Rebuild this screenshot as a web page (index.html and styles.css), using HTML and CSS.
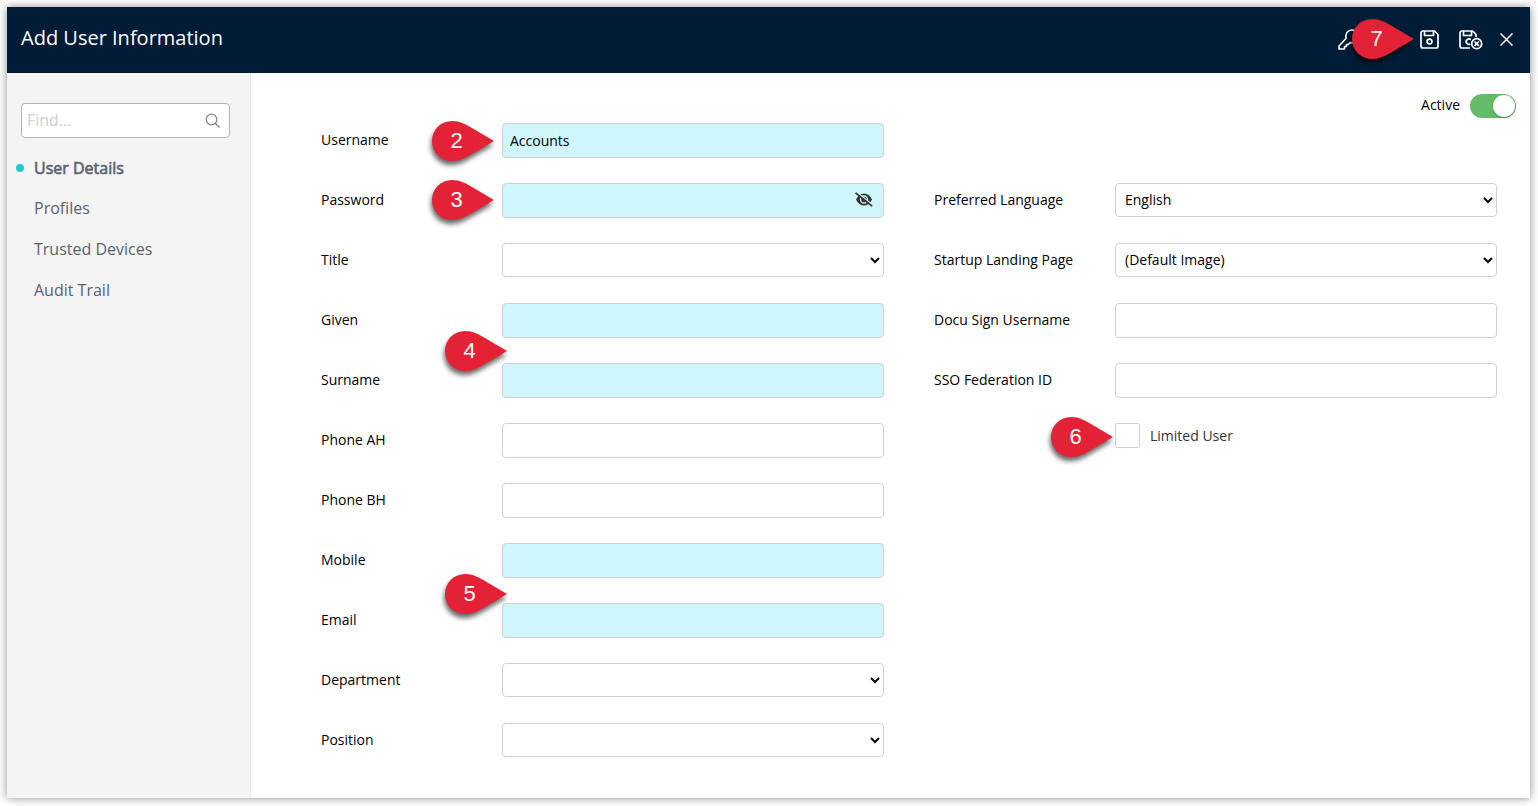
FILE: index.html
```html
<!DOCTYPE html>
<html lang="en">
<head>
  <meta charset="UTF-8" />
  <meta name="viewport" content="width=device-width, initial-scale=1.0"/>
  <title>Add User Information</title>
  <link rel="stylesheet" href="styles.css">
</head>
<body>
  <svg width="0" height="0" class="defs">
    <symbol id="pin" viewBox="0 0 62 40">
      <path d="M20 0C28 0 34 3.500 40 7L62 20L40 33C34 36.500 28 40 20 40A20 20 0 0 1 20 0Z" fill="#e32236"/>
    </symbol>
  </svg>

  <div class="window">
    <header class="header">
      <h1>Add User Information</h1>
      <div class="actions">
        <svg class="icon-key" width="22" height="21" viewBox="0 0 22 21" fill="none" stroke="#fff" stroke-width="1.600" stroke-linejoin="round">
          <path d="M14 1C17.900 1 21 3.700 21 7.500S17.900 14 14 14L12 13.500L10.500 15.500H8.500V17.500H6.500V20H1V17L8 9.500C6.800 4.500 10 1 14 1Z"/>
        </svg>
        <svg class="icon-save" width="19" height="19" viewBox="0 0 19 19" fill="none" stroke="#fff" stroke-width="1.700" stroke-linejoin="round">
          <path d="M3 1H14.500L18 4.500V16A2 2 0 0 1 16 18H3A2 2 0 0 1 1 16V3A2 2 0 0 1 3 1Z"/>
          <path d="M4.500 1V5.500H13.500V1"/>
          <circle cx="9.500" cy="11.500" r="2.400"/>
        </svg>
        <svg class="icon-save-close" width="24" height="21" viewBox="0 -1 24 21" fill="none" stroke="#fff" stroke-width="1.700" stroke-linejoin="round">
          <path d="M11 18H3A2 2 0 0 1 1 16V3A2 2 0 0 1 3 1H13.500L17 4.500V7"/>
          <path d="M4.500 1V5.500H12.500V1"/>
          <path d="M11.800 9.700A2.700 2.700 0 1 0 11.200 14"/>
          <circle cx="17.700" cy="13.700" r="5"/>
          <path d="M15.500 11.500L19.900 15.900M19.900 11.500L15.500 15.900"/>
        </svg>
        <svg class="icon-close" width="13" height="13" viewBox="0 0 13 13" stroke="#fff" stroke-width="1.500">
          <path d="M.5 .5L12.500 12.500M12.500 .5L.5 12.500"/>
        </svg>
      </div>
      <div class="marker m7"><svg><use href="#pin"/></svg><span>7</span></div>
    </header>

    <div class="body">
      <nav class="sidebar">
        <div class="search">
          <input type="text" placeholder="Find..." />
          <svg width="15" height="15" viewBox="0 0 15 15" fill="none" stroke="#888" stroke-width="1.300">
            <circle cx="6.500" cy="6.500" r="5.300"/>
            <path d="M10.300 10.300L14.500 14.500"/>
          </svg>
        </div>
        <ul>
          <li class="selected">User Details</li>
          <li>Profiles</li>
          <li>Trusted Devices</li>
          <li>Audit Trail</li>
        </ul>
      </nav>

      <main class="content">
        <div class="active-toggle">
          <span>Active</span>
          <div class="switch"></div>
        </div>

        <form class="form">
          <!-- Left column -->
          <div class="column">
            <div class="row">
              <label for="username">Username</label>
              <div class="field">
                <input type="text" id="username" class="required" value="Accounts" />
                <div class="marker m2"><svg><use href="#pin"/></svg><span>2</span></div>
              </div>
            </div>
            <div class="row">
              <label for="password">Password</label>
              <div class="field">
                <input type="password" id="password" class="required" />
                <svg class="eye" width="18" height="15" viewBox="0 0 18 15">
                  <path d="M1 7.500C2.800 3.500 5.800 1.500 9 1.500S15.200 3.500 17 7.500C15.200 11.500 12.200 13.500 9 13.500S2.800 11.500 1 7.500Z" fill="#333"/>
                  <circle cx="9" cy="7.500" r="3.500" fill="none" stroke="#cff6fc" stroke-width="1.300"/>
                  <path d="M1.500 0L18 13" stroke="#cff6fc" stroke-width="1.300"/>
                  <path d="M.5 .8L17.200 14.200" stroke="#333" stroke-width="1.700"/>
                </svg>
                <div class="marker m3"><svg><use href="#pin"/></svg><span>3</span></div>
              </div>
            </div>
            <div class="row">
              <label for="title">Title</label>
              <div class="field"><select id="title"><option></option></select></div>
            </div>
            <div class="row">
              <label for="given">Given</label>
              <div class="field">
                <input type="text" id="given" class="required" />
                <div class="marker m4"><svg><use href="#pin"/></svg><span>4</span></div>
              </div>
            </div>
            <div class="row">
              <label for="surname">Surname</label>
              <div class="field"><input type="text" id="surname" class="required" /></div>
            </div>
            <div class="row">
              <label for="phoneAh">Phone AH</label>
              <div class="field"><input type="text" id="phoneAh" /></div>
            </div>
            <div class="row">
              <label for="phoneBh">Phone BH</label>
              <div class="field"><input type="text" id="phoneBh" /></div>
            </div>
            <div class="row">
              <label for="mobile">Mobile</label>
              <div class="field">
                <input type="text" id="mobile" class="required" />
                <div class="marker m5"><svg><use href="#pin"/></svg><span>5</span></div>
              </div>
            </div>
            <div class="row">
              <label for="email">Email</label>
              <div class="field"><input type="text" id="email" class="required" /></div>
            </div>
            <div class="row">
              <label for="department">Department</label>
              <div class="field"><select id="department"><option></option></select></div>
            </div>
            <div class="row">
              <label for="position">Position</label>
              <div class="field"><select id="position"><option></option></select></div>
            </div>
          </div>

          <!-- Right column -->
          <div class="column right">
            <div class="row">
              <label for="language">Preferred Language</label>
              <div class="field"><select id="language"><option>English</option></select></div>
            </div>
            <div class="row">
              <label for="landing">Startup Landing Page</label>
              <div class="field"><select id="landing"><option>(Default Image)</option></select></div>
            </div>
            <div class="row">
              <label for="docusign">Docu Sign Username</label>
              <div class="field"><input type="text" id="docusign" /></div>
            </div>
            <div class="row">
              <label for="sso">SSO Federation ID</label>
              <div class="field"><input type="text" id="sso" /></div>
            </div>
            <div class="row">
              <div class="field check">
                <input type="checkbox" id="limited" />
                <label for="limited">Limited User</label>
                <div class="marker m6"><svg><use href="#pin"/></svg><span>6</span></div>
              </div>
            </div>
          </div>
        </form>
      </main>
    </div>
  </div>
</body>
</html>
```
FILE: styles.css
```css
* {
  box-sizing: border-box;
}
body {
  margin: 0;
  padding: 7px 8px 8px 7px;
  height: 806px;
  background: #fff;
  font-family: 'Open Sans', sans-serif;
  font-size: 14px;
  color: #000;
  overflow: hidden;
}
.defs {
  position: absolute;
}
.window {
  height: 791px;
  display: flex;
  flex-direction: column;
  background: #fff;
  box-shadow: 0 0 9px rgba(0,0,0,0.45);
}
.header {
  position: relative;
  height: 66px;
  flex: none;
  display: flex;
  justify-content: space-between;
  padding: 0 17px 0 14px;
  background: #001c36;
}
h1 {
  margin: 0;
  font-size: 20px;
  font-weight: 400;
  line-height: 62px;
  color: #fff;
}
.actions {
  display: flex;
  align-items: center;
  padding-bottom: 1px;
}
.icon-key {
  margin-right: 60px;
}
.icon-save {
  margin-right: 20px;
}
.icon-save-close {
  margin-right: 17px;
}
.body {
  flex: 1;
  display: flex;
}
.sidebar {
  width: 244px;
  padding: 30px 20px 0 14px;
  background: #f4f4f4;
  border-right: 1px solid #e9e9e9;
}
.search {
  width: 209px;
  height: 35px;
  display: flex;
  align-items: center;
  padding: 0 9px 0 5px;
  background: #fff;
  border: 1px solid #b4b4b4;
  border-radius: 4px;
}
.search input {
  flex: 1;
  min-width: 0;
  padding: 0 0 2px;
  border: none;
  font: 16px 'Open Sans', sans-serif;
}
.search input::placeholder {
  color: #d0d0d0;
}
.sidebar ul {
  list-style: none;
  margin: 10px 0 0;
  padding: 0 0 0 13px;
}
.sidebar li {
  height: 41px;
  line-height: 41px;
  font-size: 16px;
  color: #5a6270;
}
.sidebar .selected {
  position: relative;
  height: 40px;
  -webkit-text-stroke: 0.6px #5a6270;
}
.selected::before {
  content: '';
  position: absolute;
  left: -18px;
  top: 16px;
  width: 8px;
  height: 8px;
  border-radius: 50%;
  background: #1fcad3;
}
.content {
  flex: 1;
}
.active-toggle {
  height: 50px;
  display: flex;
  justify-content: flex-end;
  align-items: flex-start;
  gap: 10px;
  padding: 21px 14px 0 0;
}
.active-toggle span {
  line-height: 22px;
}
.switch {
  width: 46px;
  height: 24px;
  display: flex;
  justify-content: flex-end;
  align-items: center;
  padding-right: 1px;
  border-radius: 12px;
  background: #66bb6a;
}
.switch::after {
  content: '';
  width: 22px;
  height: 22px;
  border-radius: 50%;
  background: #fff;
  box-shadow: 0 1px 2px rgba(0,0,0,0.3);
}
.form {
  display: flex;
  gap: 50px;
  padding-left: 70px;
}
.column {
  width: 563px;
}
.right {
  padding-top: 60px;
}
.row {
  height: 60px;
  display: flex;
}
.row > label {
  width: 181px;
  line-height: 34px;
}
.field {
  position: relative;
  width: 382px;
}
.field input[type="text"],
.field input[type="password"],
.field select {
  display: block;
  width: 100%;
  height: 35px;
  padding: 0 7px;
  border: 1px solid #d0d0d0;
  border-radius: 4px;
  background: #fff;
  font: 14px 'Open Sans', sans-serif;
  color: #000;
}
.field select {
  height: 34px;
  padding: 0 0 2px 5px;
}
.field input.required {
  background: #cff6fc;
}
.eye {
  position: absolute;
  right: 11px;
  top: 9px;
}
.check {
  display: flex;
  gap: 10px;
  margin-left: 181px;
}
.check input {
  appearance: none;
  width: 25px;
  height: 25px;
  margin: 0;
  border: 1px solid #d0d0d0;
  border-radius: 2px;
}
.check label {
  line-height: 26px;
  color: #333;
}
.marker {
  position: absolute;
  z-index: 1;
  width: 62px;
  height: 40px;
}
.marker svg {
  display: block;
  width: 62px;
  height: 40px;
  filter: drop-shadow(-1px 4px 2.5px rgba(0,0,0,0.6));
}
.marker span {
  position: absolute;
  left: 0;
  top: 0;
  width: 49px;
  line-height: 40px;
  text-align: center;
  font-family: 'Liberation Sans', sans-serif;
  font-size: 22px;
  color: #fff;
}
.m2 {
  left: -70px;
  top: -2px;
}
.m3 {
  left: -70px;
  top: -3px;
}
.m4 {
  left: -57px;
  top: 28px;
}
.m5 {
  left: -57px;
  top: 31px;
}
.m6 {
  left: -64px;
  top: -6px;
}
.m7 {
  right: 116px;
  top: 12px;
}
```
